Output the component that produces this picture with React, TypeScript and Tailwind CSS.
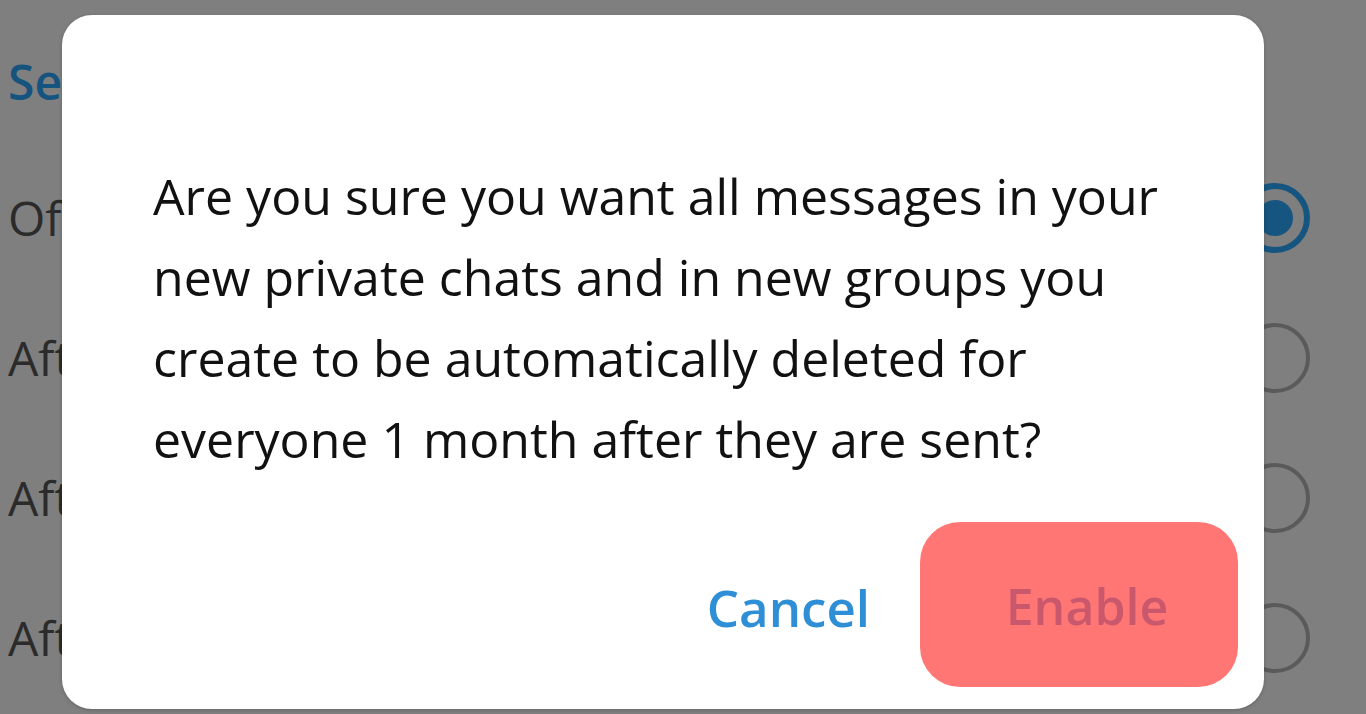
const rows = ['Off', 'After 1 day', 'After 1 week', 'After 1 month']

function Radio({ checked }: { checked?: boolean }) {
  return checked ? (
    <div className="flex h-[70px] w-[70px] items-center justify-center rounded-full border-[6px] border-[#16557f]">
      <div className="h-[36px] w-[36px] rounded-full bg-[#16557f]" />
    </div>
  ) : (
    <div className="h-[70px] w-[70px] rounded-full border-[4px] border-[#5a5a5a]" />
  )
}

export default function App() {
  return (
    <div className="relative h-[714px] w-[1366px] overflow-hidden bg-[#7f7f7f] font-['Open_Sans',sans-serif]">
      {/* page behind the overlay */}
      <div className="flex flex-col pl-[8px] pr-[56px] pt-[50px]">
        <div className="h-[98px] text-[48px] font-semibold leading-[64px] text-[#15547f]">Self-destruct timer</div>
        {rows.map((r, i) => (
          <div key={r} className="flex h-[140px] items-center justify-between">
            <span className="text-[48px] text-[#2b2b2b]">{r}</span>
            <Radio checked={i === 0} />
          </div>
        ))}
      </div>

      {/* dialog */}
      <div className="absolute left-[62px] top-[15px] flex h-[694px] w-[1202px] flex-col rounded-[30px] bg-white shadow-[0_1px_4px_rgba(0,0,0,0.2)]">
        <p className="pl-[91px] pr-[60px] pt-[141px] text-[50px] leading-[81px] text-[#111111]">
          Are you sure you want all messages in your new private chats and in new groups you create to be automatically
          deleted for everyone 1 month after they are sent?
        </p>
        <div className="mt-auto flex items-center justify-end gap-[50px] pb-[22px] pr-[26px]">
          <button type="button" className="pt-[6px] text-[51px] font-semibold text-[#2e8fd6]">
            Cancel
          </button>
          <button
            type="button"
            className="flex h-[165px] w-[318px] items-center justify-center rounded-[40px] bg-[#ff7675] pl-[16px] pt-[4px] text-[50px] font-semibold text-[#c9586d]"
          >
            Enable
          </button>
        </div>
      </div>
    </div>
  )
}
